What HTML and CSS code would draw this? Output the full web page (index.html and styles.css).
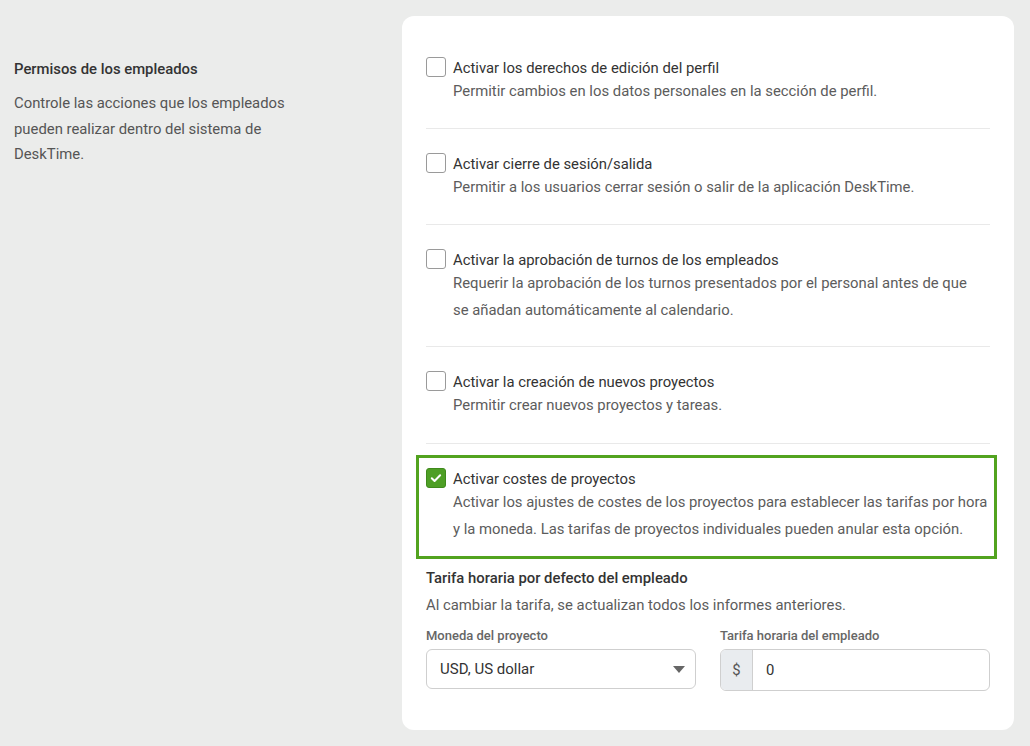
FILE: index.html
```html
<!DOCTYPE html>
<html lang="es">
<head>
<meta charset="utf-8">
<link rel="stylesheet" href="styles.css">
</head>
<body>
<div class="page">
  <aside class="intro">
    <h2 class="intro-title">Permisos de los empleados</h2>
    <p class="intro-text">Controle las acciones que los empleados pueden realizar dentro del sistema de DeskTime.</p>
  </aside>
  <main class="card">
    <div class="option">
      <span class="check"></span>
      <div class="option-body">
        <div class="option-title">Activar los derechos de edición del perfil</div>
        <div class="option-desc">Permitir cambios en los datos personales en la sección de perfil.</div>
      </div>
    </div>
    <div class="option">
      <span class="check"></span>
      <div class="option-body">
        <div class="option-title">Activar cierre de sesión/salida</div>
        <div class="option-desc">Permitir a los usuarios cerrar sesión o salir de la aplicación DeskTime.</div>
      </div>
    </div>
    <div class="option">
      <span class="check"></span>
      <div class="option-body">
        <div class="option-title">Activar la aprobación de turnos de los empleados</div>
        <div class="option-desc">Requerir la aprobación de los turnos presentados por el personal antes de que se añadan automáticamente al calendario.</div>
      </div>
    </div>
    <div class="option">
      <span class="check"></span>
      <div class="option-body">
        <div class="option-title">Activar la creación de nuevos proyectos</div>
        <div class="option-desc">Permitir crear nuevos proyectos y tareas.</div>
      </div>
    </div>
    <div class="option option-active">
      <span class="check check-on">
        <svg viewBox="0 0 20 20" width="20" height="20"><path d="M5.3 10.2l3.1 3.1 6.2-6.4" fill="none" stroke="#fff" stroke-width="2.2" stroke-linecap="round" stroke-linejoin="round"/></svg>
      </span>
      <div class="option-body">
        <div class="option-title">Activar costes de proyectos</div>
        <div class="option-desc">Activar los ajustes de costes de los proyectos para establecer las tarifas por hora y la moneda. Las tarifas de proyectos individuales pueden anular esta opción.</div>
      </div>
    </div>
    <section class="rate">
      <h3 class="rate-title">Tarifa horaria por defecto del empleado</h3>
      <p class="rate-desc">Al cambiar la tarifa, se actualizan todos los informes anteriores.</p>
      <div class="fields">
        <div class="field">
          <label class="field-label">Moneda del proyecto</label>
          <div class="select">
            <span>USD, US dollar</span>
            <svg class="caret" viewBox="0 0 12 7" width="12" height="7"><path d="M0 0h12L6 7z" fill="#666"/></svg>
          </div>
        </div>
        <div class="field">
          <label class="field-label">Tarifa horaria del empleado</label>
          <div class="input-group">
            <span class="addon">$</span>
            <span class="input-value">0</span>
          </div>
        </div>
      </div>
    </section>
  </main>
</div>
</body>
</html>
```
FILE: styles.css
```css
* { box-sizing: border-box; }
html, body { margin: 0; padding: 0; }
body {
  background: #ebeceb;
  font-family: Roboto, "Liberation Sans", sans-serif;
  font-size: 14.85px;
  color: #333;
  width: 1030px;
  height: 746px;
  overflow: hidden;
}
.page {
  display: grid;
  grid-template-columns: 402px 612px;
  padding-top: 16px;
}
.intro {
  padding: 43px 0 0 14px;
}
.intro-title {
  margin: 0;
  font-size: 14.85px;
  font-weight: 500;
  line-height: 20px;
  color: #333;
}
.intro-text {
  margin: 12px 0 0;
  max-width: 292px;
  line-height: 25.5px;
  color: #555;
}
.card {
  background: #fff;
  border-radius: 12px;
  height: 714px;
  padding: 17px 24px 0;
}
.option {
  display: flex;
  align-items: flex-start;
  gap: 7px;
  padding: 24px 0 23px;
  border-bottom: 1px solid #e9e9e9;
}
.option:nth-child(3) { padding-bottom: 22px; }
.option:nth-child(4) { padding-bottom: 24px; }
.check {
  flex: none;
  width: 20px;
  height: 20px;
  border: 1px solid #9a9a9a;
  border-radius: 3px;
  background: #fff;
  display: flex;
  align-items: center;
  justify-content: center;
}
.check-on {
  background: #4e9f25;
  border-color: #3f8a1c;
}
.check-on svg { display: block; }
.option-body {
  flex: 1;
  max-width: 530px;
  margin-top: 1px;
}
.option-title {
  line-height: 20px;
  color: #333;
}
.option-desc {
  line-height: 27px;
  color: #5c5c5c;
}
.option-active {
  border: 3px solid #52a31f;
  border-bottom: 3px solid #52a31f;
  margin: 11px -7px 0 -10px;
  padding: 10px 0 13px 7px;
}
.option-active .option-body { max-width: none; }
.rate { padding-top: 9px; }
.rate-title {
  margin: 0;
  font-size: 14.85px;
  font-weight: 500;
  line-height: 20px;
  color: #333;
}
.rate-desc {
  margin: 4px 0 0;
  line-height: 27px;
  color: #5c5c5c;
}
.fields {
  display: grid;
  grid-template-columns: 1fr 1fr;
  gap: 24px;
  margin-top: 8px;
}
.field-label {
  display: block;
  font-size: 13px;
  font-weight: 500;
  line-height: 18px;
  color: #666;
  margin-bottom: 4px;
}
.select {
  height: 40px;
  border: 1px solid #cfcfcf;
  border-radius: 6px;
  display: flex;
  align-items: center;
  justify-content: space-between;
  padding: 0 10px 0 13px;
  color: #333;
  font-size: 15px;
}
.caret { display: block; }
.input-group {
  height: 42px;
  border: 1px solid #cfcfcf;
  border-radius: 6px;
  display: flex;
  overflow: hidden;
}
.addon {
  width: 32px;
  background: #e9ecef;
  border-right: 1px solid #cfcfcf;
  display: flex;
  align-items: center;
  justify-content: center;
  color: #555;
}
.input-value {
  display: flex;
  align-items: center;
  padding-left: 13px;
  color: #333;
}
```
